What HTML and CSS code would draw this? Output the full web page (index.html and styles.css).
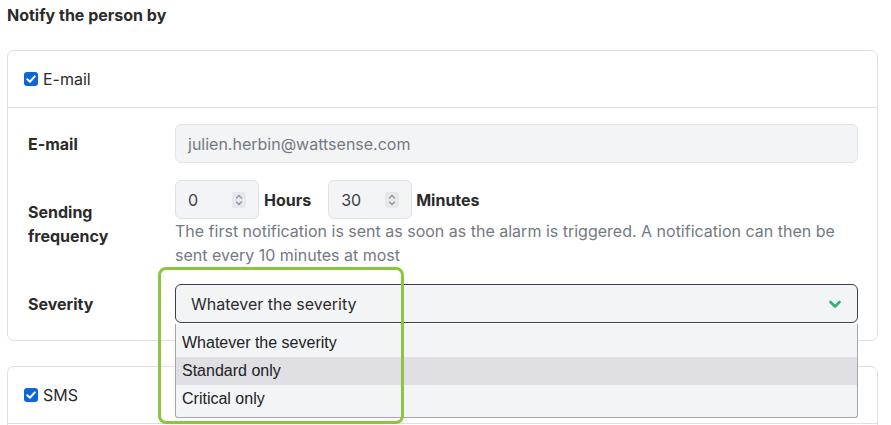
FILE: index.html
```html
<!DOCTYPE html>
<html>
<head>
<meta charset="utf-8">
<link rel="stylesheet" href="styles.css">
</head>
<body>
<div class="page">
  <h2 class="title">Notify the person by</h2>

  <section class="card">
    <div class="card-head">
      <span class="check"><svg viewBox="0 0 14 14" width="14" height="14"><path d="M3.3 7.2 L5.9 9.7 L10.8 4.4" fill="none" stroke="#fff" stroke-width="2" stroke-linecap="round" stroke-linejoin="round"/></svg></span>
      <span class="head-label">E-mail</span>
    </div>
    <div class="card-body">
      <div class="row">
        <div class="label">E-mail</div>
        <div class="field">
          <div class="input">julien.herbin@wattsense.com</div>
        </div>
      </div>
      <div class="row">
        <div class="label">Sending<br>frequency</div>
        <div class="field">
          <div class="freq">
            <div class="num"><span>0</span><span class="spin"><svg viewBox="0 0 14 16" width="14" height="16"><path d="M4.5 6 L7 3.5 L9.5 6 M4.5 10 L7 12.5 L9.5 10" fill="none" stroke="#8a9099" stroke-width="1.2" stroke-linecap="round" stroke-linejoin="round"/></svg></span></div>
            <span class="unit">Hours</span>
            <div class="num"><span>30</span><span class="spin"><svg viewBox="0 0 14 16" width="14" height="16"><path d="M4.5 6 L7 3.5 L9.5 6 M4.5 10 L7 12.5 L9.5 10" fill="none" stroke="#8a9099" stroke-width="1.2" stroke-linecap="round" stroke-linejoin="round"/></svg></span></div>
            <span class="unit">Minutes</span>
          </div>
          <p class="help">The first notification is sent as soon as the alarm is triggered. A notification can then be sent every 10 minutes at most</p>
        </div>
      </div>
      <div class="row">
        <div class="label">Severity</div>
        <div class="field sel-wrap">
          <div class="select">
            <span>Whatever the severity</span>
            <svg viewBox="0 0 14 14" width="14" height="14"><path d="M2.5 5 L7 9.5 L11.5 5" fill="none" stroke="#2bb673" stroke-width="2.6" stroke-linecap="round" stroke-linejoin="round"/></svg>
          </div>
          <ul class="options">
            <li>Whatever the severity</li>
            <li class="hover">Standard only</li>
            <li>Critical only</li>
          </ul>
          <div class="highlight"></div>
        </div>
      </div>
    </div>
  </section>

  <section class="card">
    <div class="card-head">
      <span class="check"><svg viewBox="0 0 14 14" width="14" height="14"><path d="M3.3 7.2 L5.9 9.7 L10.8 4.4" fill="none" stroke="#fff" stroke-width="2" stroke-linecap="round" stroke-linejoin="round"/></svg></span>
      <span class="head-label">SMS</span>
    </div>
    <div class="card-body"></div>
  </section>
</div>
</body>
</html>
```

FILE: styles.css
```css
*, *::before, *::after {
  box-sizing: border-box;
}
html, body {
  margin: 0;
  padding: 0;
  background: #fff;
  overflow: hidden;
}
body {
  font-family: Inter, "Noto Sans", sans-serif;
  color: #212529;
  font-size: 16px;
}
.page {
  width: 878px;
  padding: 5px 0 0 7px;
}
.title {
  margin: 0 0 25px 0;
  font-size: 16px;
  font-weight: 700;
  line-height: 20px;
  color: #2b2b2b;
}
.card {
  border: 1px solid #dcdfe3;
  border-radius: 7px;
  margin-bottom: 25px;
}
.card-head {
  height: 57px;
  display: flex;
  align-items: center;
  gap: 5px;
  padding-left: 16px;
  border-bottom: 1px solid #dcdfe3;
}
.check {
  width: 14px;
  height: 14px;
  border-radius: 3px;
  background: #0b66d8;
  display: flex;
}
.head-label {
  font-size: 16px;
  color: #2b2b2b;
}
.card-body {
  padding: 16px 19px 17px 20px;
  display: flex;
  flex-direction: column;
  gap: 17px;
}
.row {
  display: flex;
  align-items: center;
}
.label {
  width: 147px;
  flex: none;
  font-weight: 700;
  line-height: 24px;
  color: #2b2b2b;
}
.field {
  flex: 1;
}
.input {
  height: 39px;
  border: 1px solid #e3e5e8;
  border-radius: 6px;
  background: #f3f4f6;
  display: flex;
  align-items: center;
  padding-left: 12px;
  color: #737a82;
}
.freq {
  display: flex;
  align-items: center;
}
.num {
  width: 84px;
  height: 39px;
  border: 1px solid #dfe1e5;
  border-radius: 6px;
  background: #f3f4f6;
  display: flex;
  align-items: center;
  justify-content: space-between;
  padding: 0 12px 0 12px;
  color: #3b3f45;
}
.unit {
  font-weight: 700;
  color: #2b2b2b;
  margin: 0 17px 0 5px;
}
.unit:last-child {
  margin: 0 0 0 4px;
}
.spin {
  display: flex;
  background: #e6e8eb;
  border-radius: 2px;
}
.help {
  margin: 0;
  line-height: 24px;
  color: #737a82;
}
.sel-wrap {
  position: relative;
}
.select {
  height: 39px;
  border: 1px solid #3a3f47;
  border-radius: 6px;
  background: #f3f4f6;
  display: flex;
  align-items: center;
  justify-content: space-between;
  padding: 0 15px 0 15px;
  color: #2b2b2b;
}
.options {
  position: absolute;
  left: 0;
  right: 0;
  top: 40px;
  margin: 0;
  padding: 5px 0 4px;
  list-style: none;
  background: #f3f4f6;
  border: 1px solid #a3a6ab;
  border-top: none;
  border-radius: 0 0 3px 3px;
  font-family: "Liberation Sans", Arial, sans-serif;
  font-size: 16px;
  color: #222;
}
.options li {
  height: 28px;
  line-height: 28px;
  padding-left: 6px;
}
.options li.hover {
  background: #dfdfe4;
}
.highlight {
  position: absolute;
  left: -17px;
  top: -17px;
  width: 246px;
  height: 157px;
  border: 3px solid #8cc63f;
  border-radius: 8px;
  pointer-events: none;
}
```
